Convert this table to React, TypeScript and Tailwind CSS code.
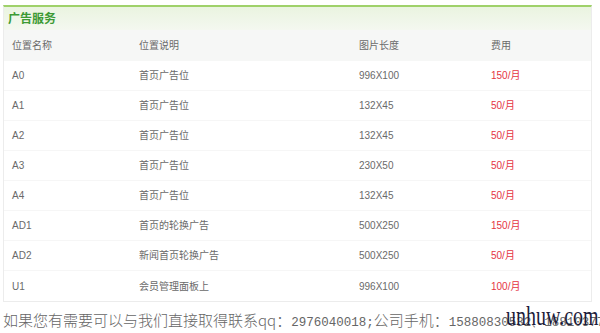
const rows = [
  { code: 'A0', desc: '首页广告位', size: '996X100', fee: '150/月' },
  { code: 'A1', desc: '首页广告位', size: '132X45', fee: '50/月' },
  { code: 'A2', desc: '首页广告位', size: '132X45', fee: '50/月' },
  { code: 'A3', desc: '首页广告位', size: '230X50', fee: '50/月' },
  { code: 'A4', desc: '首页广告位', size: '132X45', fee: '50/月' },
  { code: 'AD1', desc: '首页的轮换广告', size: '500X250', fee: '150/月' },
  { code: 'AD2', desc: '新闻首页轮换广告', size: '500X250', fee: '50/月' },
  { code: 'U1', desc: '会员管理面板上', size: '996X100', fee: '100/月' },
]

const cjk = { fontFamily: '"Liberation Sans", "Noto Sans CJK SC", sans-serif' }
const mono = { fontFamily: '"Liberation Mono", monospace' }

export default function App() {
  return (
    <div className="relative w-[600px] h-[333px] bg-white overflow-hidden pt-[5px] pl-[3px]" style={cjk}>
      <div className="w-[589px] border-x border-b border-[#ececec] border-t-2 border-t-[#9fd16a]">
        <div className="h-[23px] flex items-center pl-[4px] bg-gradient-to-b from-[#eaf4e0] to-[#f4f8f0]">
          <span className="text-[12px] font-bold text-[#3c9a34]">广告服务</span>
        </div>
        <div className="grid grid-cols-[127px_220px_132px_1fr] pl-[8px] h-[31px] items-center bg-[#f6f7f6] text-[10px] text-[#6a6a6a]">
          <span>位置名称</span>
          <span>位置说明</span>
          <span>图片长度</span>
          <span>费用</span>
        </div>
        {rows.map((r) => (
          <div
            key={r.code}
            className="grid grid-cols-[127px_220px_132px_1fr] pl-[8px] h-[30px] items-center border-b border-[#f6f6f6] last:border-b-0 text-[10px] text-[#6a6a6a]"
          >
            <span>{r.code}</span>
            <span>{r.desc}</span>
            <span>{r.size}</span>
            <span className="text-[#e5333f]">{r.fee}</span>
          </div>
        ))}
      </div>
      <p
        className="mt-[9px] text-[15px] leading-[18px] font-light text-[#666] whitespace-nowrap"
        style={{ fontFamily: '"Noto Sans CJK SC", sans-serif' }}
      >
        如果您有需要可以与我们直接取得联系qq：
        <span className="text-[12.5px] font-normal" style={mono}>2976040018;</span>
        公司手机：
        <span className="text-[12.5px] font-normal" style={mono}>15880830532、18810377765</span>
      </p>
      <span
        className="absolute left-[506px] top-[302px] text-[20px] leading-none text-[#1c1c3a] origin-top scale-y-[1.35]"
        style={{ fontFamily: '"Liberation Serif", serif' }}
      >
        unhuw.com
      </span>
    </div>
  )
}
